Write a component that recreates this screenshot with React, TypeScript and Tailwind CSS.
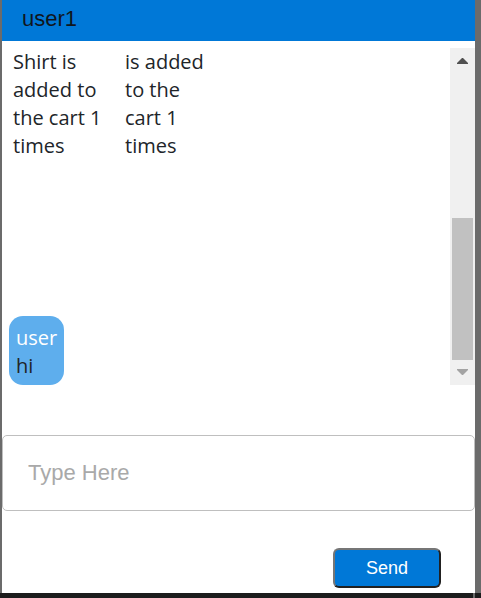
import React from "react";

const cartNotices = ["Shirt is added to the cart 1 times", "is added to the cart 1 times"];

function ScrollRail() {
  return (
    <div className="flex w-[25px] shrink-0 flex-col items-center bg-[#f0f0f0] px-0.5 py-[10px]">
      <svg className="h-[6px] w-[11px] shrink-0" viewBox="0 0 11 6" fill="#505050" aria-hidden="true">
        <path d="M5 0h1l5 5v1H0V5z" />
      </svg>
      <div className="grow" />
      <div className="h-[142px] w-full bg-[#c1c1c1]" />
      <svg className="mt-[9px] h-[6px] w-[11px] shrink-0" viewBox="0 0 11 6" fill="#a3a3a3" aria-hidden="true">
        <path d="M0 0h11v1L6 6H5L0 1z" />
      </svg>
    </div>
  );
}

export default function App() {
  return (
    <div className="flex h-screen flex-col bg-[#1c1c1c] font-['Liberation_Sans',Arial,sans-serif]">
      <div className="flex grow bg-[#6b6b6b] pr-1.5 pl-0.5">
        <main className="flex min-w-0 grow flex-col bg-white">
          <header className="h-[41px] bg-[#0078d7] px-5 pt-[5px] text-[22px] leading-7 text-[#10161d]">
            <h1>user1</h1>
          </header>

          <section className="mt-[7px] flex h-[337px] font-['Open_Sans','Noto_Sans',sans-serif] text-[20px] leading-7 text-[#212529]">
            <div className="flex min-w-0 grow flex-col items-start justify-between pl-[7px]">
              <div className="flex gap-5 pl-1">
                {cartNotices.map((notice) => (
                  <p key={notice} className="w-[92px]">{notice}</p>
                ))}
              </div>
              <div className="rounded-[14px] bg-[#5eaeed] px-[7px] pt-[8px] pb-[5px]">
                <p className="text-white">user</p>
                <p>hi</p>
              </div>
            </div>
            <ScrollRail />
          </section>

          <form className="mt-[50px] flex flex-col" onSubmit={(event) => event.preventDefault()}>
            <input
              type="text"
              aria-label="Message"
              placeholder="Type Here"
              className="h-[76px] w-full rounded-[5px] border border-[#bfbfbf] px-[25px] text-[22px] text-[#212529] placeholder:text-[#a9a9a9]"
            />
            <button
              type="submit"
              className="mt-[37px] mr-[34px] h-10 w-[108px] self-end rounded-md border-2 border-t-[#767676] border-r-[#212121] border-b-[#212121] border-l-[#767676] bg-[#0078d7] text-lg text-white"
            >
              Send
            </button>
          </form>
        </main>
      </div>
      <footer className="h-[5px] shrink-0 pr-1.5">
        <div className="ml-auto h-full w-0.5 bg-[#6b6b6b]" />
      </footer>
    </div>
  );
}
